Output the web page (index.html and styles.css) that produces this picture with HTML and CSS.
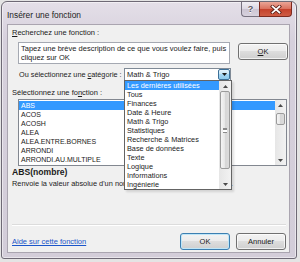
FILE: index.html
```html
<!DOCTYPE html>
<html lang="fr">
<head>
<meta charset="utf-8">
<title>Insérer une fonction</title>
<link rel="stylesheet" href="styles.css">
</head>
<body>
<div class="window">
  <div class="titlebar">
    <span class="title">Insérer une fonction</span>
    <div class="caption">
      <div class="cap-help">?</div>
      <div class="cap-close">
        <svg width="12" height="9" viewBox="0 0 12 9"><path d="M2.5 1.5 L9.5 7.5 M9.5 1.5 L2.5 7.5" stroke="#5b2018" stroke-width="3.4" stroke-linecap="square"/><path d="M2.5 1.5 L9.5 7.5 M9.5 1.5 L2.5 7.5" stroke="#ffffff" stroke-width="1.7" stroke-linecap="square"/></svg>
      </div>
    </div>
  </div>
  <div class="client">
    <div class="label"><u>R</u>echerchez une fonction :</div>
    <div class="search-row">
      <div class="textarea">Tapez une brève description de ce que vous voulez faire, puis cliquez sur OK</div>
      <div class="button btn-top"><u>O</u>K</div>
    </div>
    <div class="cat-row">
      <span class="cat-label">Ou sélectionnez une <u>c</u>atégorie :</span>
      <div class="combo">
        <span class="combo-text">Math &amp; Trigo</span>
        <div class="combo-btn"><svg width="5" height="3" viewBox="0 0 5 3"><polygon points="0,0 5,0 2.5,3" fill="#1a1a1a"/></svg></div>
      </div>
    </div>
    <div class="label label-fn">Sélectionnez une fo<u>n</u>ction :</div>
    <div class="funclist">
      <div class="fn-items">
        <div class="fn-item sel">ABS</div>
        <div class="fn-item">ACOS</div>
        <div class="fn-item">ACOSH</div>
        <div class="fn-item">ALEA</div>
        <div class="fn-item">ALEA.ENTRE.BORNES</div>
        <div class="fn-item">ARRONDI</div>
        <div class="fn-item">ARRONDI.AU.MULTIPLE</div>
      </div>
      <div class="vscroll fn-scroll">
        <div class="arrow"><svg width="5" height="3" viewBox="0 0 5 3"><polygon points="0,3 5,3 2.5,0" fill="#4a4a4a"/></svg></div>
        <div class="track"><div class="thumb fn-thumb"></div></div>
        <div class="arrow"><svg width="5" height="3" viewBox="0 0 5 3"><polygon points="0,0 5,0 2.5,3" fill="#4a4a4a"/></svg></div>
      </div>
    </div>
    <div class="syntax">ABS(nombre)</div>
    <div class="desc">Renvoie la valeur absolue d'un nombre, un nombre sans son signe.</div>
    <div class="sep"></div>
    <div class="footer">
      <a class="help-link" href="#">Aide sur cette fonction</a>
      <div class="buttons">
        <div class="button btn-default">OK</div>
        <div class="button">Annuler</div>
      </div>
    </div>

    <div class="dropdown">
      <div class="dd-items">
        <div class="dd-item sel">Les dernières utilisées</div>
        <div class="dd-item">Tous</div>
        <div class="dd-item">Finances</div>
        <div class="dd-item">Date &amp; Heure</div>
        <div class="dd-item">Math &amp; Trigo</div>
        <div class="dd-item">Statistiques</div>
        <div class="dd-item">Recherche &amp; Matrices</div>
        <div class="dd-item">Base de données</div>
        <div class="dd-item">Texte</div>
        <div class="dd-item">Logique</div>
        <div class="dd-item">Informations</div>
        <div class="dd-item">Ingénierie</div>
      </div>
      <div class="vscroll dd-scroll">
        <div class="arrow"><svg width="5" height="3" viewBox="0 0 5 3"><polygon points="0,3 5,3 2.5,0" fill="#4a4a4a"/></svg></div>
        <div class="track"><div class="thumb dd-thumb"><span class="grip"></span></div></div>
        <div class="arrow"><svg width="5" height="3" viewBox="0 0 5 3"><polygon points="0,0 5,0 2.5,3" fill="#4a4a4a"/></svg></div>
      </div>
    </div>
  </div>
</div>
</body>
</html>
```

FILE: styles.css
```css
* { box-sizing: border-box; }
html, body { margin: 0; padding: 0; }
body {
  width: 300px;
  height: 262px;
  overflow: hidden;
  background: #e4e4e4;
  font-family: "Liberation Sans", Arial, sans-serif;
  font-size: 7.5px;
  color: #1b1b1b;
}
u { text-decoration: underline; }

.window {
  margin: 1px 0 0 1px;
  width: 296px;
  height: 258px;
  border: 1px solid #6e6975;
  border-radius: 6px 6px 3px 3px;
  background: linear-gradient(#e4dfe8, #d6d0dc 40px, #d3cdd9);
  padding: 0 6px 5px 5px;
  display: flex;
  flex-direction: column;
  box-shadow: inset 0 0 0 1px rgba(255,255,255,0.5);
}

.titlebar {
  height: 22px;
  display: flex;
  align-items: flex-start;
}
.title {
  margin-top: 8px;
  font-size: 8.4px;
  line-height: 11px;
  color: #1e1e1e;
}
.caption {
  margin-left: auto;
  margin-right: -2px;
  display: flex;
}
.cap-help {
  width: 18px;
  height: 15px;
  border: 1px solid #77717f;
  border-top: none;
  border-right: none;
  border-radius: 0 0 0 4px;
  background: linear-gradient(#f1eef4, #dcd7e2 50%, #cbc4d2 50%, #d8d2de);
  display: flex;
  align-items: center;
  justify-content: center;
  font-weight: bold;
  font-size: 9px;
  color: #5a5660;
  text-shadow: 0 1px 0 #fff;
}
.cap-close {
  width: 33px;
  height: 15px;
  border: 1px solid #7d2a1f;
  border-top: none;
  border-radius: 0 0 4px 0;
  background: linear-gradient(#eaa596, #d9705c 50%, #c4402a 50%, #cf5c44);
  display: flex;
  align-items: center;
  justify-content: center;
}

.client {
  position: relative;
  width: 283px;
  height: 229px;
  background: #f0f0f0;
  border: 1px solid #aaa5b0;
  padding: 0 0 0 4px;
  display: flex;
  flex-direction: column;
}

.label {
  margin-top: 3px;
  line-height: 10px;
  height: 10px;
  white-space: nowrap;
}

.search-row {
  margin-top: 4px;
  margin-left: 6px;
  display: flex;
  align-items: flex-start;
  gap: 8px;
}
.textarea {
  width: 212px;
  height: 22px;
  background: #fff;
  border: 1px solid #a5a9b2;
  padding: 1px 2px;
  line-height: 9px;
}

.button {
  width: 50px;
  height: 17px;
  border: 1px solid #707070;
  border-radius: 3px;
  background: linear-gradient(#f3f3f3, #ebebeb 50%, #dddddd 50%, #cfcfcf);
  box-shadow: inset 0 0 0 1px rgba(255,255,255,0.7);
  display: flex;
  align-items: center;
  justify-content: center;
  line-height: 10px;
}
.btn-top { margin-top: 1px; }

.cat-row {
  margin-top: 4px;
  margin-left: 7px;
  display: flex;
  align-items: center;
  height: 13px;
}
.cat-label {
  flex: none;
  width: 105px;
  white-space: nowrap;
  font-size: 7.3px;
}
.combo {
  flex: none;
  width: 107px;
  height: 13px;
  background: #fff;
  border: 1px solid #7f8a96;
  display: flex;
  align-items: center;
}
.combo-text {
  flex: 1;
  padding-left: 2px;
}
.combo-btn {
  width: 12px;
  height: 11px;
  border: 1px solid #3c6f97;
  border-radius: 2px;
  background: linear-gradient(#e3f3fc, #c3e4f6 50%, #a5d6f2 50%, #8ecbee);
  display: flex;
  align-items: center;
  justify-content: center;
}

.label-fn { margin-top: 7px; }

.funclist {
  margin-top: 1px;
  margin-left: 6px;
  width: 269px;
  height: 67px;
  background: #fff;
  border: 1px solid #828790;
  display: flex;
}
.fn-items {
  flex: 1;
  padding: 1px 0 0 0;
}
.fn-item {
  height: 9px;
  line-height: 9px;
  padding-left: 2px;
  font-size: 7px;
}
.sel {
  background: #3399ff;
  color: #fff;
}

.vscroll {
  width: 11px;
  display: flex;
  flex-direction: column;
  background: linear-gradient(to right, #e6e6e6, #f2f2f2);
}
.arrow {
  height: 10px;
  display: flex;
  align-items: center;
  justify-content: center;
}
.track { flex: 1; }
.thumb {
  margin: 0 1px;
  border: 1px solid #9b9b9b;
  border-radius: 2px;
  background: linear-gradient(to right, #f5f5f5, #e6e6e6 50%, #d6d6d6 50%, #dcdcdc);
}
.fn-thumb { margin-top: 3px; height: 12px; }

.syntax {
  margin-top: 1px;
  font-weight: bold;
  font-size: 8.6px;
  line-height: 11px;
}
.desc {
  margin-top: 1px;
  line-height: 10px;
  font-size: 7.4px;
  white-space: nowrap;
}
.sep {
  margin-top: 35px;
  margin-right: 3px;
  height: 2px;
  border-top: 1px solid #dcdcdc;
  border-bottom: 1px solid #ffffff;
}
.footer {
  margin-top: 7px;
  margin-right: 3px;
  display: flex;
  align-items: center;
}
.help-link {
  color: #1a55c9;
  text-decoration: underline;
}
.buttons {
  margin-left: auto;
  display: flex;
  gap: 6px;
}
.btn-default {
  border-color: #3c7fb1;
  box-shadow: inset 0 0 0 1px #bfe6f8;
}

.dropdown {
  position: absolute;
  left: 116px;
  top: 55px;
  width: 108px;
  height: 110px;
  background: #fff;
  border: 1px solid #646464;
  display: flex;
  box-shadow: 2px 2px 2px rgba(0,0,0,0.12);
}
.dd-items { flex: 1; }
.dd-item {
  height: 9px;
  line-height: 9px;
  padding-left: 2px;
  font-size: 7.3px;
  white-space: nowrap;
}
.dd-scroll { width: 12px; }
.dd-thumb {
  margin-top: 0;
  height: 78px;
  display: flex;
  align-items: center;
  justify-content: center;
}
.grip {
  width: 4px;
  height: 5px;
  border-top: 1px solid #8a8a8a;
  border-bottom: 1px solid #8a8a8a;
  background: linear-gradient(#fff 0 1px, #8a8a8a 1px 2px, #fff 2px);
  background-size: 100% 3px;
  background-position: 0 -1px;
}
```
